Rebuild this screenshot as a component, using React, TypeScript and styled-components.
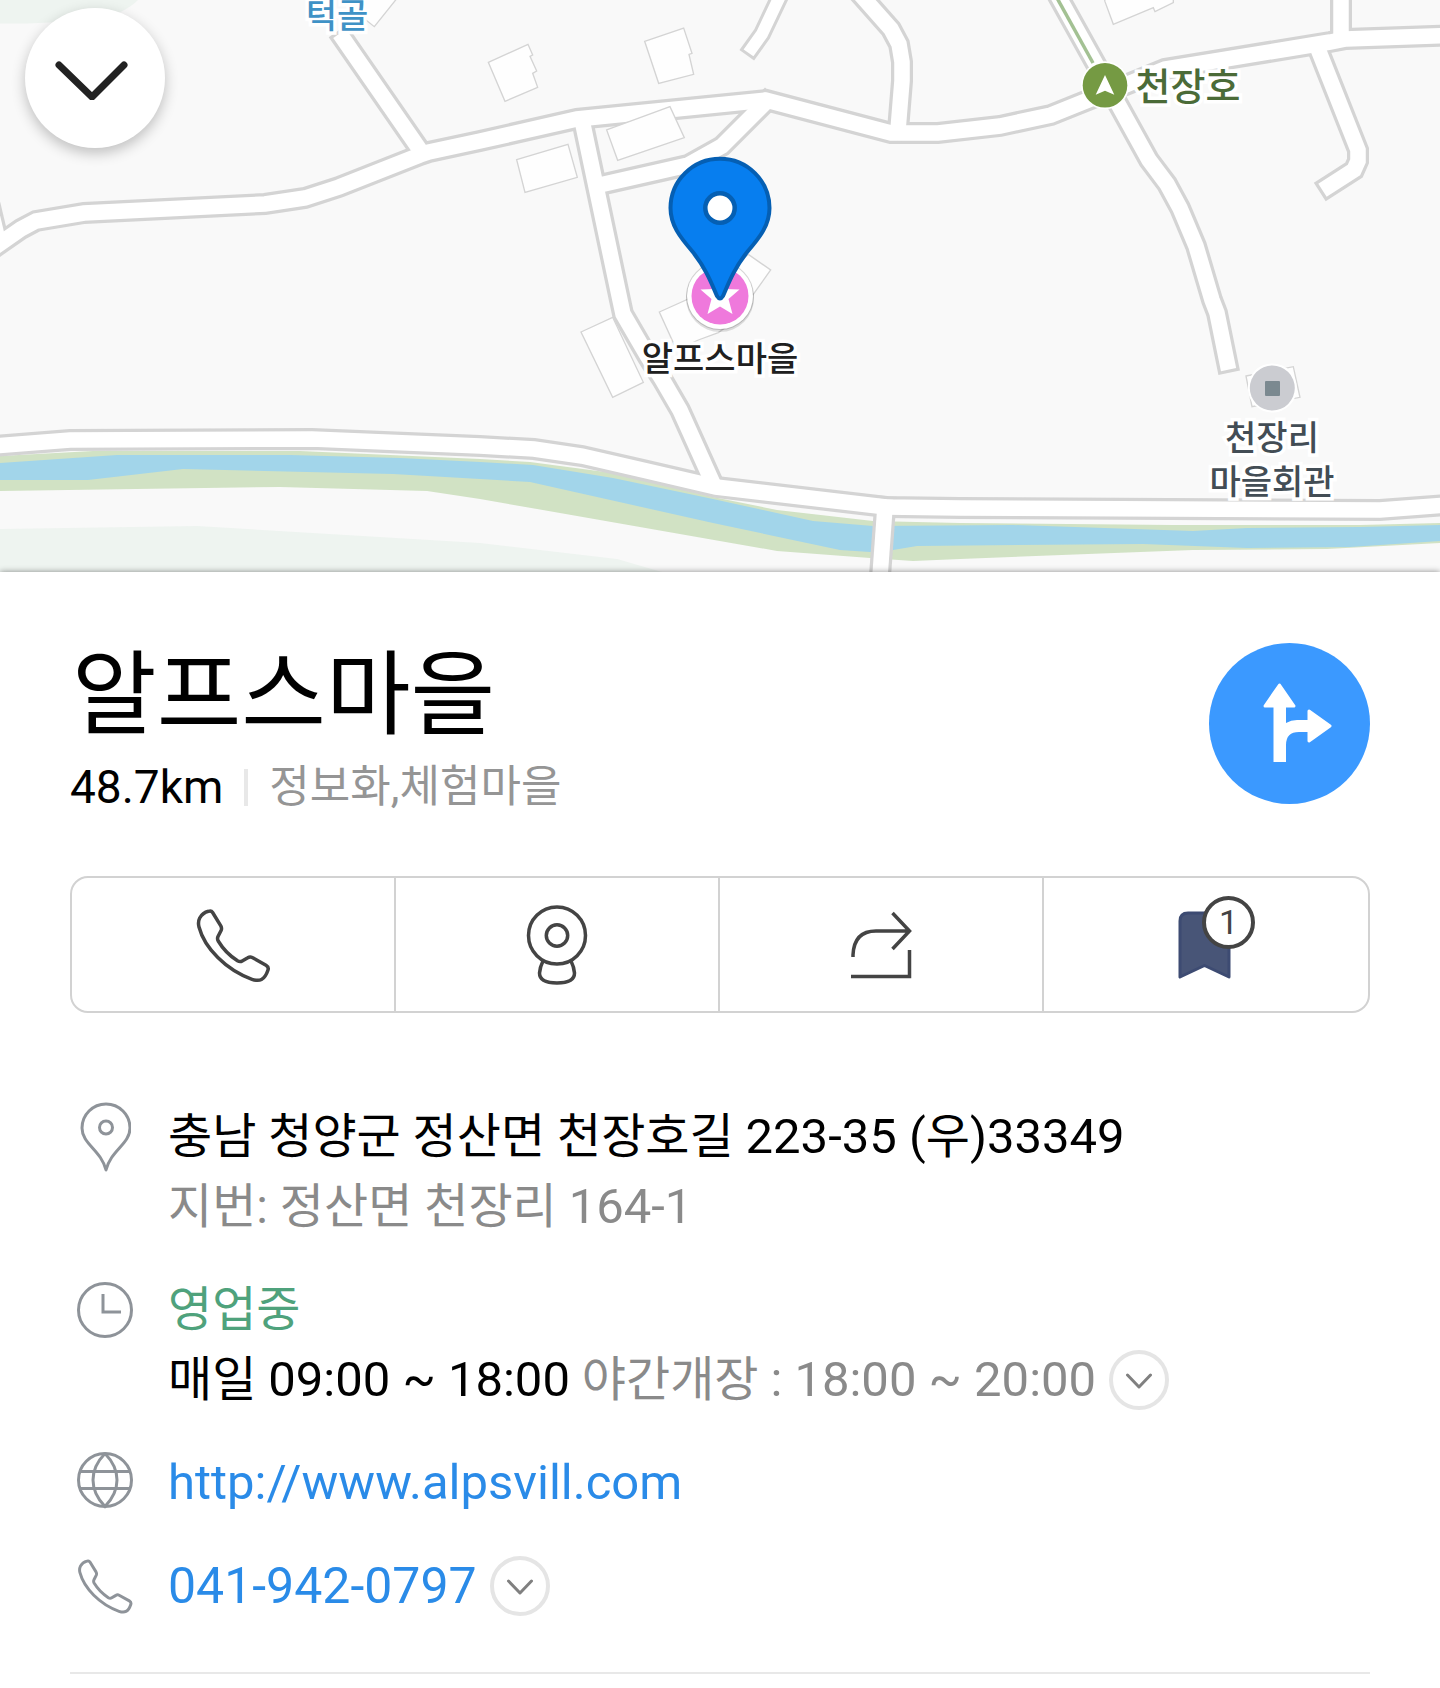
import React from "react";
import styled, { createGlobalStyle } from "styled-components";

const GlobalStyle = createGlobalStyle`
  *, *::before, *::after { box-sizing: border-box; }
  body {
    margin: 0;
    background: #fff;
    color: #000;
    font-family: Roboto, "Noto Sans CJK KR", sans-serif;
  }
  h1, p, ul { margin: 0; padding: 0; }
  ul { list-style: none; }
  button { padding: 0; border: 0; background: none; color: inherit; font: inherit; cursor: pointer; }
  a { color: inherit; text-decoration: none; }
  svg { display: block; }
`;

/* ---------- map ---------- */

const MapArea = styled.section`
  position: relative;
  height: 572px;
  overflow: hidden;
  background: #f9f9f9;
`;

const MapCanvas = styled.svg`
  width: 100%;
  height: 100%;
`;

const MapLabel = styled.div<{ $x: number; $y: number; $color: string; $size?: number }>`
  position: absolute;
  left: calc(50% + ${(p) => p.$x}px);
  top: ${(p) => p.$y}px;
  transform: translate(-50%, -50%);
  color: ${(p) => p.$color};
  font-family: "Noto Sans CJK KR", sans-serif;
  font-size: ${(p) => p.$size ?? 34}px;
  font-weight: 500;
  line-height: 44px;
  text-align: center;
  white-space: pre;
  -webkit-text-stroke: 7px #fff;
  paint-order: stroke fill;
`;

const CollapseButton = styled.button`
  position: absolute;
  left: 25px;
  top: 8px;
  width: 140px;
  height: 140px;
  display: grid;
  place-items: center;
  border-radius: 50%;
  background: #fff;
  box-shadow: 0 5px 14px rgba(0, 0, 0, 0.24);
`;

const ROADS: string[] = [
  "M-5 247 L21 229 L36 221 L84 213 L265 204 L305 198 L339 187 L420 155 L429 152 L480 141 L577 119 L766 100 L891 133 L938 133 L1000 126 L1051 115 L1128 84 L1165 69 L1330 42 L1346 39 L1460 35",
  "M-8 215 L-3 236",
  "M344 40 L420 150",
  "M582 120 L620 300 L623 314 L648 357 L662 379 L680 410 L711 479",
  "M765 103 L722 146 L688 165 L604 184",
  "M860 -6 L891 29 L899 44 L902 62 L902 81 L898 130",
  "M1058 -4 L1107 84 L1149 160 L1167 184 L1180 208 L1196 246 L1212 300 L1217 313 L1227 362",
  "M1341 -10 L1341 38",
  "M1320 54 L1358 150 L1358 161 L1354 170 L1329 186",
  "M-20 447 L70 440 L312 439 L480 446 L534 449 L582 456 L647 471 L716 487 L886 507 L960 508 L1380 510 L1460 504",
  "M885 507 L879 590",
];
const LANE = "M780 -4 L762 34 L752 48";

/* Building outlines are stored at three units to the pixel. */
const BUILDINGS: string[] = [
  "1465,187 1584,133 1598,165 1590,169 1610,213 1598,220 1613,262 1515,304",
  "1934,124 2051,84 2076,160 2067,163 2081,223 1976,250",
  "1820,390 2010,320 2053,413 1853,481",
  "1550,479 1704,433 1732,532 1575,577",
  "2190,810 2245,763 2312,810 2255,890",
  "1743,996 1838,952 1930,1147 1838,1192",
  "1978,936 2080,890 2180,980 2155,998 2095,1020 2030,1050",
  "3310,-20 3315,5 3340,73 3460,23 3465,35 3520,8 3520,-20",
  "1060,30 1123,80 1195,-10 1060,-10",
  "3738,1128 3880,1100 3900,1192 3756,1220",
];

function MapDrawing() {
  return (
    <MapCanvas viewBox="0 0 1440 572" preserveAspectRatio="xMidYMid slice" aria-hidden="true">
      <path d="M0 0 H138 Q126 12 100 20 L28 23.500 H0 Z" fill="#eef4f0" />
      <path d="M0 529 L197 526 L480 543 L617 559 L662 572 H0 Z" fill="#eef4f0" />
      <path
        fill="#d1e2c4"
        d="M0 456 L93 451 L300 451 L480 459 L530 462 L613 473 L713 497 L777 510 L873 521 L960 523 L1173 525 L1360 525 L1440 523 V543 L1327 549 L1193 550 L960 559 L913 561 L870 558 L777 551 L480 499 L427 491 L280 487 L0 491 Z"
      />
      <path
        fill="#a2d5ea"
        d="M0 463 L117 455 L290 455 L400 458 L480 462 L533 465 L613 478 L713 499 L813 521 L873 526 L1013 525 L1193 531 L1247 528 L1360 527 L1440 525 V541 L1350 547 L1247 548 L1143 544 L917 546 L893 550 L870 552 L840 550 L713 523 L530 482 L480 479 L393 474 L183 469 L88 480 L0 480 Z"
      />
      <g fill="none" stroke="#d4d4d4" strokeLinecap="square">
        {ROADS.map((d) => <path key={d} d={d} strokeWidth="22" />)}
        <path d={LANE} strokeWidth="18" />
      </g>
      <g fill="none" stroke="#fff" strokeLinecap="square">
        {ROADS.map((d) => <path key={d} d={d} strokeWidth="15.500" />)}
        <path d={LANE} strokeWidth="12" />
      </g>
      <g fill="#fefefe" stroke="#d4d4d4" strokeWidth="4" transform="scale(0.33333)">
        {BUILDINGS.map((p) => <polygon key={p} points={p} />)}
      </g>
      <path d="M1057 -2 L1093 63" stroke="#a3c193" strokeWidth="3.500" />

      <circle cx="1105" cy="85.300" r="24" fill="#fff" />
      <circle cx="1105" cy="85.300" r="22.300" fill="#759a43" />
      <path d="M1105 75 L1114.300 94.700 L1105 90.700 L1095.700 94.700 Z" fill="#fff" />

      <circle cx="1272.300" cy="388" r="24.500" fill="#fff" />
      <circle cx="1272.300" cy="388" r="22.500" fill="#cbccd1" />
      <rect x="1265" y="381" width="15" height="15" rx="1" fill="#7b8990" />

      <circle cx="720" cy="298" r="34" fill="#000" opacity="0.120" />
      <circle cx="720" cy="296" r="34" fill="#000" opacity="0.160" />
      <circle cx="720" cy="296" r="33" fill="#fff" />
      <circle cx="720" cy="296" r="28.500" fill="#ef79dc" />
      <path
        fill="#fff"
        d="M720 276 L725 289 L739.500 289.500 L728.500 299 L732.500 314 L720 306.500 L707.500 314 L711.500 299 L700.500 289.500 L715 289 Z"
      />
      <path
        fill="#077eef"
        stroke="#055fb3"
        strokeWidth="4"
        d="M720 158.700 A49.500 49.500 0 0 0 670.500 208 C670.500 225 680 237 692 251 C705 267 711 282 717 296 Q720 301 723 296 C729 282 735 267 748 251 C760 237 769.500 225 769.500 208 A49.500 49.500 0 0 0 720 158.700 Z"
      />
      <circle cx="720" cy="208" r="14.700" fill="#fff" stroke="#055fb3" strokeWidth="4.500" />
    </MapCanvas>
  );
}

/* ---------- place sheet ---------- */

const Sheet = styled.main`
  position: relative;
  padding: 71px 70px 14px;
  background: #fff;
  box-shadow: 0 0 6px rgba(0, 0, 0, 0.45);
`;

const Header = styled.header`
  display: flex;
  justify-content: space-between;
  align-items: flex-start;
`;

const Title = styled.h1`
  padding-left: 2px;
  font-size: 92px;
  font-weight: 400;
  line-height: 106px;
`;

const Meta = styled.div`
  display: flex;
  align-items: center;
  gap: 21px;
  margin-top: 8px;
  font-size: 44px;
  line-height: 60px;
`;

const Distance = styled.span`
  font-size: 46px;
`;

const Separator = styled.span`
  width: 4px;
  height: 37px;
  background: #e8e8e8;
`;

const Category = styled.span`
  color: #959595;
`;

const RouteButton = styled.button`
  flex: none;
  width: 161px;
  height: 161px;
  display: grid;
  place-items: center;
  border-radius: 50%;
  background: #3b99ff;
`;

const Actions = styled.div`
  display: grid;
  grid-template-columns: repeat(4, 1fr);
  height: 137px;
  margin-top: 59px;
  border: 2px solid #d2d2d2;
  border-radius: 18px;
`;

const Action = styled.button`
  display: grid;
  place-items: center;
  color: #444;

  &:not(:last-child) {
    border-right: 2px solid #d2d2d2;
  }
`;

const Saved = styled.span`
  position: relative;
  display: block;
`;

const SavedCount = styled.span`
  position: absolute;
  left: 24px;
  top: -15px;
  width: 53px;
  height: 53px;
  border: 4px solid #444;
  border-radius: 50%;
  background: #fff;
  color: #444;
  font-size: 34px;
  line-height: 45px;
  text-align: center;
`;

const Details = styled.ul`
  display: flex;
  flex-direction: column;
  gap: 33px;
  margin-top: 89px;
  padding-bottom: 51px;
  border-bottom: 2px solid #e8e8e8;
`;

const Detail = styled.li`
  display: grid;
  grid-template-columns: 70px 1fr;
  column-gap: 28px;
`;

const DetailIcon = styled.span`
  height: 70px;
  display: grid;
  place-items: center;
  color: #8e9399;
`;

const Line = styled.p<{ $color?: string }>`
  display: flex;
  align-items: center;
  min-height: 70px;
  color: ${(p) => p.$color ?? "#000"};
  font-size: 48px;
  line-height: 70px;
  white-space: pre-wrap;
`;

const Latin = styled.span`
  font-size: 49px;
  line-height: 1;
`;

const Muted = styled.span`
  color: #8a8a8a;
`;

const DetailLink = styled.a<{ $size: number }>`
  color: #2a8be8;
  font-size: ${(p) => p.$size}px;
`;

const ExpandButton = styled.button`
  flex: none;
  width: 60px;
  height: 60px;
  display: grid;
  place-items: center;
  margin-left: 13px;
  border: 4px solid #e5e5e5;
  border-radius: 50%;
  color: #808080;
`;

/* ---------- icons ---------- */

function PhoneIcon({ size, stroke }: { size: number; stroke: number }) {
  return (
    <svg width={size} height={size} viewBox="0 0 76 76" fill="none" stroke="currentColor" strokeWidth={stroke} strokeLinejoin="round">
      <path d="M13.500 4.300 Q16.200 3.200 17.600 5.500 L25.800 18.800 Q27 21 26.200 23.200 L23 29.500 Q22 31.700 23.200 34 C28 42 35 49 42.500 53.800 Q45 55.300 47.200 54 L52.800 50.700 Q55 49.300 57.200 50.500 L71 58.200 Q74 60 73 63 Q70.500 70.500 66.500 72.500 Q63 74.300 57 72.300 C31 63 9.500 41 4 20 Q2.700 15 4.700 11 C7 6.800 10 5.200 13.500 4.300 Z" />
    </svg>
  );
}

function ChevronIcon() {
  return (
    <svg width="28" height="18" viewBox="0 0 28 18" fill="none" stroke="currentColor" strokeWidth="3" strokeLinecap="round" strokeLinejoin="round">
      <path d="M2.500 4 L14 16 L25.500 4" />
    </svg>
  );
}

export default function App() {
  return (
    <>
      <GlobalStyle />
      <MapArea aria-label="지도">
        <MapDrawing />
        <MapLabel $x={-383} $y={14} $color="#3f92c6">턱골</MapLabel>
        <MapLabel $x={468} $y={84} $color="#4b6b38" $size={38}>천장호</MapLabel>
        <MapLabel $x={0} $y={357} $color="#202020">알프스마을</MapLabel>
        <MapLabel $x={552} $y={458} $color="#434d55">{"천장리\n마을회관"}</MapLabel>
        <CollapseButton type="button" aria-label="닫기">
          <svg width="80" height="44" viewBox="0 0 80 44" fill="none" stroke="#222" strokeWidth="7" strokeLinecap="round" strokeLinejoin="round">
            <path d="M4 9 L37 41 L69 9" />
          </svg>
        </CollapseButton>
      </MapArea>

      <Sheet>
        <Header>
          <div>
            <Title>알프스마을</Title>
            <Meta>
              <Distance>48.7km</Distance>
              <Separator />
              <Category>정보화,체험마을</Category>
            </Meta>
          </div>
          <RouteButton type="button" aria-label="길찾기">
            <svg width="161" height="161" viewBox="0 0 161 161" fill="#fff" stroke="#fff" strokeLinejoin="round">
              <path d="M70.500 42 L85 63 H56 Z M100 68 L121 83 L100 98 Z" strokeWidth="3" />
              <path stroke="none" d="M64.500 60 H77 V80 Q82 77 88 77 H100 V89 H90 Q77 89 77 102 V119 H64.500 Z" />
            </svg>
          </RouteButton>
        </Header>

        <Actions>
          <Action type="button" aria-label="전화">
            <PhoneIcon size={76} stroke={3.5} />
          </Action>
          <Action type="button" aria-label="로드뷰">
            <svg width="62" height="82" viewBox="0 0 62 82" fill="none" stroke="currentColor" strokeWidth="3.500">
              <circle cx="31" cy="31.500" r="28.500" />
              <circle cx="31" cy="31.500" r="10.700" />
              <path d="M17 57 Q14 63 13.500 69 Q13.500 79 31 79 Q48.500 79 48.500 69 Q48 63 45 57" />
            </svg>
          </Action>
          <Action type="button" aria-label="공유">
            <svg width="64" height="68" viewBox="0 0 64 68" fill="none" stroke="currentColor" strokeWidth="3.500">
              <path d="M4 46 V44 Q5 20 27 20 H60 M43.500 2 L60.500 20 L43.500 38 M60.500 39 V65.500 H2" />
            </svg>
          </Action>
          <Action type="button" aria-label="저장">
            <Saved>
              <svg width="56" height="68" viewBox="0 0 56 68" fill="#485577" stroke="#3d4b72" strokeWidth="3" strokeLinejoin="round">
                <path d="M2 66 V10 Q2 2 10 2 H51 V66 L26.500 54.500 Z" />
              </svg>
              <SavedCount>1</SavedCount>
            </Saved>
          </Action>
        </Actions>

        <Details>
          <Detail>
            <DetailIcon>
              <svg width="52" height="70" viewBox="1 0 52 70" fill="none" stroke="currentColor" strokeWidth="3" strokeLinejoin="round">
                <path d="M28 2 A24 24 0 0 0 4 26 C4 42 23 48 28 68 C33 48 52 42 52 26 A24 24 0 0 0 28 2 Z" />
                <circle cx="28" cy="25.500" r="6.500" />
              </svg>
            </DetailIcon>
            <div>
              <Line>
                <span>충남 청양군 정산면 천장호길 <Latin>223-35 (</Latin>우<Latin>)33349</Latin></span>
              </Line>
              <Line $color="#8a8a8a">
                <span>지번: 정산면 천장리 <Latin>164-1</Latin></span>
              </Line>
            </div>
          </Detail>

          <Detail>
            <DetailIcon>
              <svg width="56" height="56" viewBox="0 0 56 56" fill="none" stroke="currentColor" strokeWidth="3">
                <circle cx="28" cy="28" r="26.500" />
                <path d="M26 12 V30 H44" />
              </svg>
            </DetailIcon>
            <div>
              <Line $color="#4fa27c">영업중</Line>
              <Line>
                <span>매일 <Latin>09:00 ~ 18:00</Latin> <Muted>야간개장 <Latin>: 18:00 ~ 20:00</Latin></Muted></span>
                <ExpandButton type="button" aria-label="영업시간 더보기"><ChevronIcon /></ExpandButton>
              </Line>
            </div>
          </Detail>

          <Detail>
            <DetailIcon>
              <svg width="56" height="62" viewBox="0 0 56 62" fill="none" stroke="currentColor" strokeWidth="3">
                <circle cx="28" cy="28" r="26.500" />
                <path d="M28 1.500 C12 18 12 38 28 54.500 C44 38 44 18 28 1.500 M3 19.500 H53 M3 36.500 H53" />
              </svg>
            </DetailIcon>
            <Line>
              <DetailLink $size={49} href="http://www.alpsvill.com">http://www.alpsvill.com</DetailLink>
            </Line>
          </Detail>

          <Detail>
            <DetailIcon>
              <PhoneIcon size={56} stroke={4} />
            </DetailIcon>
            <Line>
              <DetailLink $size={50} href="tel:041-942-0797">041-942-0797</DetailLink>
              <ExpandButton type="button" aria-label="전화번호 더보기"><ChevronIcon /></ExpandButton>
            </Line>
          </Detail>
        </Details>
      </Sheet>
    </>
  );
}
